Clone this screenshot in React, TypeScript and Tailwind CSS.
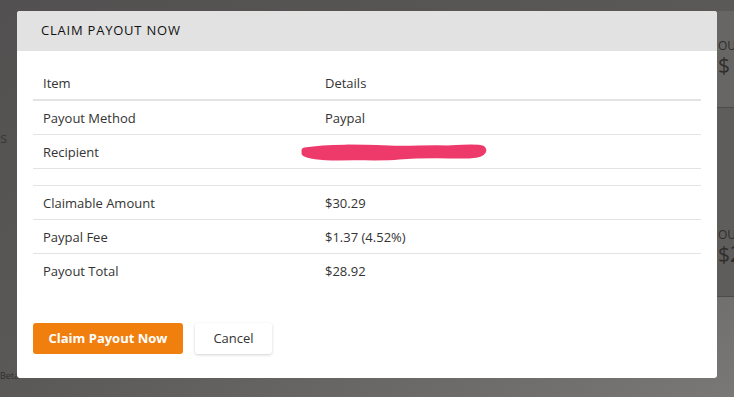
const rows = [
  { item: 'Payout Method', details: 'Paypal' },
  { item: 'Recipient', details: 'redacted' },
  { item: '', details: '' },
  { item: 'Claimable Amount', details: '$30.29' },
  { item: 'Paypal Fee', details: '$1.37 (4.52%)' },
  { item: 'Payout Total', details: '$28.92' },
];

function Scribble() {
  return (
    <svg width="190" height="24" viewBox="0 0 190 24" className="block">
      <path
        d="M6 10 C30 6 60 7 90 8 C110 9 130 7 150 8 C165 7 178 6 183 8 C186 11 180 14 165 14 C145 14 125 13 100 15 C80 17 60 15 40 16 C25 16 10 15 6 12 Z"
        fill="#ee3a6b"
        stroke="#ee3a6b"
        strokeWidth="7"
        strokeLinejoin="round"
      />
    </svg>
  );
}

export default function App() {
  return (
    <div
      className="relative h-[397px] w-full overflow-hidden bg-gradient-to-br from-[#525050] via-[#5b5957] to-[#7a7876]"
      style={{ fontFamily: '"Open Sans", "Noto Sans", sans-serif' }}
    >
      {/* page behind the overlay */}
      <div className="absolute left-0 top-[126px] text-[15px] text-[#3a3938]">s</div>
      <div className="absolute left-0 top-[369px] text-[9px] text-[#2e2d2c]">Beta</div>
      <div className="absolute left-[717px] top-[11px] flex h-[97px] w-[17px] flex-col overflow-hidden border-b border-[#4e4c4a] bg-[#686664] pl-[1px] pt-[28px]">
        <span className="text-[12px] leading-[14px] text-[#2f2e2d]">OU</span>
        <span className="text-[21px] leading-[24px] text-[#2f2e2d]">$</span>
      </div>
      <div className="absolute left-[717px] top-[108px] flex h-[189px] w-[17px] flex-col overflow-hidden border-b border-[#4e4c4a] bg-[#5f5d5b] pl-[1px] pt-[120px]">
        <span className="text-[12px] leading-[14px] text-[#2f2e2d]">OU</span>
        <span className="text-[21px] leading-[24px] text-[#2f2e2d]">$2</span>
      </div>

      {/* modal */}
      <div className="absolute left-[17px] top-[11px] flex h-[367px] w-[700px] flex-col rounded-[3px] bg-white text-[#333]">
        <div className="flex h-10 items-center rounded-t-[3px] bg-[#e2e2e2] px-6">
          <h2 className="text-[13px] font-normal tracking-[0.06em] text-[#111]">CLAIM PAYOUT NOW</h2>
        </div>
        <div className="px-4 pt-[16px]">
          <div className="flex h-[34px] items-center border-b-2 border-[#e3e3e3] pt-[2px] text-[13px]">
            <div className="w-[292px] pl-[10px]">Item</div>
            <div>Details</div>
          </div>
          {rows.map((row, i) => (
            <div
              key={i}
              className={
                'flex items-center pt-[2px] text-[13px] ' +
                (row.item === '' ? 'h-[17px] ' : 'h-[34px] ') +
                (i < rows.length - 1 ? 'border-b border-[#e3e3e3]' : '')
              }
            >
              <div className="w-[292px] pl-[10px]">{row.item}</div>
              <div>
                {row.details === 'redacted' ? (
                  <div className="-ml-[26px] mt-[1px]">
                    <Scribble />
                  </div>
                ) : (
                  row.details
                )}
              </div>
            </div>
          ))}
        </div>
        <div className="mt-[35px] flex gap-3 px-4">
          <button className="h-[31px] w-[150px] rounded-[3px] bg-[#f07f0e] text-[13px] font-bold text-white">
            Claim Payout Now
          </button>
          <button className="h-[31px] w-[77px] rounded-[3px] bg-white text-[13px] text-[#333] shadow-[0_1px_3px_rgba(0,0,0,0.18)]">
            Cancel
          </button>
        </div>
      </div>
    </div>
  );
}
